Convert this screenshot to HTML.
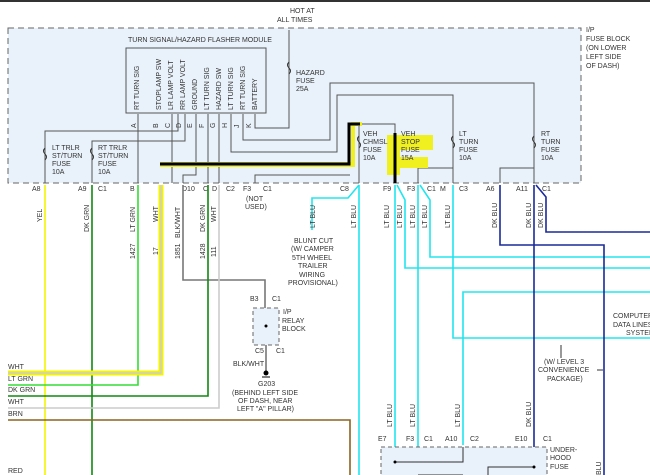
<!DOCTYPE html>
<html><head><style>
html,body{margin:0;padding:0;background:#fff;}
svg{display:block;font-family:"Liberation Sans",sans-serif;}
text{font-size:7px;fill:#333;}
.v{font-size:7px;}
</style></head><body>
<svg width="650" height="475" viewBox="0 0 650 475" xmlns="http://www.w3.org/2000/svg">
<rect x="0" y="0" width="650" height="2" fill="#333"/>
<!-- main fuse block -->
<rect x="8" y="28" width="573" height="155" fill="#e9f2fa" stroke="#666" stroke-dasharray="6,4" stroke-width="1"/>
<text x="290" y="13">HOT AT</text><text x="277" y="22">ALL TIMES</text>
<text x="586" y="32">I/P</text><text x="586" y="41">FUSE BLOCK</text><text x="586" y="50">(ON LOWER</text><text x="586" y="59">LEFT SIDE</text><text x="586" y="68">OF DASH)</text>
<text x="128" y="42">TURN SIGNAL/HAZARD FLASHER MODULE</text>
<rect x="126" y="48" width="140" height="65" fill="#e9f2fa" stroke="#555"/>
<g class="v">
<text transform="translate(139,110) rotate(-90)">RT TURN SIG</text>
<text transform="translate(161,110) rotate(-90)">STOPLAMP SW</text>
<text transform="translate(173,110) rotate(-90)">LR LAMP VOLT</text>
<text transform="translate(185,110) rotate(-90)">RR LAMP VOLT</text>
<text transform="translate(197,110) rotate(-90)">GROUND</text>
<text transform="translate(209,110) rotate(-90)">LT TURN SIG</text>
<text transform="translate(221,110) rotate(-90)">HAZARD SW</text>
<text transform="translate(233,110) rotate(-90)">LT TURN SIG</text>
<text transform="translate(245,110) rotate(-90)">RT TURN SIG</text>
<text transform="translate(257,110) rotate(-90)">BATTERY</text>
<text transform="translate(136,128) rotate(-90)">A</text>
<text transform="translate(158,128) rotate(-90)">B</text>
<text transform="translate(170,128) rotate(-90)">C</text>
<text transform="translate(181,128) rotate(-90)">D</text>
<text transform="translate(192,128) rotate(-90)">E</text>
<text transform="translate(204,128) rotate(-90)">F</text>
<text transform="translate(215,128) rotate(-90)">G</text>
<text transform="translate(227,128) rotate(-90)">H</text>
<text transform="translate(239,128) rotate(-90)">J</text>
<text transform="translate(251,128) rotate(-90)">K</text>
</g>
<!-- internal wires -->
<g fill="none" stroke="#555" stroke-width="1">
<path d="M138 114V183"/>
<path d="M172 114V183"/>
<path d="M178 114V131H45V183"/>
<path d="M185 114V141H92V183"/>
<path d="M196 114V175H183V183"/>
<path d="M208 114V183"/>
<path d="M219 114V183"/>
<path d="M231 114V152H337V95H453V183"/>
<path d="M243 114V140H330V83H534V183"/>
<path d="M255 114V128H289V30"/>
<path d="M359 124V183"/>
<path d="M418 183V168H453"/>
<path d="M500 183V168H534"/>
<path d="M348 124H395V183"/>
<path d="M255 183V175H350"/>
</g>
<!-- fuse symbols -->
<g fill="none" stroke="#333" stroke-width="1">
<path d="M45 148q-3 3 0 6q3 3 0 6"/><path d="M92 148q-3 3 0 6q3 3 0 6"/>
<path d="M289 62q-3 3 0 6q3 3 0 6"/><path d="M359 136q-3 3 0 6q3 3 0 6"/>
<path d="M453 136q-3 3 0 6q3 3 0 6"/><path d="M534 136q-3 3 0 6q3 3 0 6"/>
</g>
<text x="52" y="150">LT TRLR</text><text x="52" y="158">ST/TURN</text><text x="52" y="166">FUSE</text><text x="52" y="174">10A</text>
<text x="98" y="150">RT TRLR</text><text x="98" y="158">ST/TURN</text><text x="98" y="166">FUSE</text><text x="98" y="174">10A</text>
<text x="296" y="75">HAZARD</text><text x="296" y="83">FUSE</text><text x="296" y="91">25A</text>
<!-- yellow highlight -->
<path d="M387 135H433V150H400V157H428V168H400V175H387Z" fill="#f0f020"/>
<path d="M160 162H351V122H362V126H355V167H160Z" fill="#f0f020"/>
<path d="M160 164H349V124H360" fill="none" stroke="#000" stroke-width="3"/>
<path d="M395 133V183" stroke="#000" stroke-width="3"/>
<text x="363" y="136">VEH</text><text x="363" y="144">CHMSL</text><text x="363" y="152">FUSE</text><text x="363" y="160">10A</text>
<text x="401" y="136">VEH</text><text x="401" y="144">STOP</text><text x="401" y="152">FUSE</text><text x="401" y="160">15A</text>
<text x="459" y="136">LT</text><text x="459" y="144">TURN</text><text x="459" y="152">FUSE</text><text x="459" y="160">10A</text>
<text x="541" y="136">RT</text><text x="541" y="144">TURN</text><text x="541" y="152">FUSE</text><text x="541" y="160">10A</text>
<!-- connector labels -->
<text x="32" y="191">A8</text><text x="78" y="191">A9</text><text x="98" y="191">C1</text>
<text x="130" y="191">B</text><text x="182" y="191">D10</text><text x="203" y="191">C</text><text x="212" y="191">D</text><text x="226" y="191">C2</text>
<text x="243" y="191">F3</text><text x="263" y="191">C1</text><text x="246" y="201">(NOT</text><text x="245" y="209">USED)</text>
<text x="340" y="191">C8</text><text x="383" y="191">F9</text><text x="407" y="191">F3</text><text x="427" y="191">C1</text><text x="440" y="191">M</text><text x="459" y="191">C3</text>
<text x="486" y="191">A6</text><text x="516" y="191">A11</text><text x="542" y="191">C1</text>
<!-- wires below -->
<g fill="none" stroke-width="1.6">
<path d="M45 185V475" stroke="#f4f400"/>
<path d="M92 185V475" stroke="#118811"/>
<path d="M138 185V385H8" stroke="#33dd33"/>
<path d="M183 185V280H265V335" stroke="#777"/>
<path d="M208 185V396H8" stroke="#118811"/>
<path d="M219 185V408H8" stroke="#ccc"/>
<path d="M8 420H350V475" stroke="#8a6420"/>
<path d="M359 185L348 198H312V230" stroke="#22e5ee"/>
<path d="M359 185V475" stroke="#22e5ee"/>
<path d="M395 185V475" stroke="#22e5ee"/>
<path d="M397 185L405 200V268H650" stroke="#22e5ee"/>
<path d="M418 185V475" stroke="#22e5ee"/>
<path d="M420 185L430 200V257H650" stroke="#22e5ee"/>
<path d="M453 185V338H650" stroke="#22e5ee"/>
<path d="M463 445V292H650" stroke="#22e5ee"/>
<path d="M500 185V245H604V475" stroke="#1a2a9a"/>
<path d="M534 185V475" stroke="#1a2a9a"/>
<path d="M536 185L546 197V232H650" stroke="#1a2a9a"/>
</g>
<g fill="none" stroke="#f4f400" stroke-width="5"><path d="M161 185V373H8"/></g>
<g fill="none" stroke="#ccc" stroke-width="1.5"><path d="M161 185V373H8"/></g>
<!-- rotated wire labels -->
<g>
<text transform="translate(42,222) rotate(-90)">YEL</text>
<text transform="translate(89,232) rotate(-90)">DK GRN</text>
<text transform="translate(135,232) rotate(-90)">LT GRN</text>
<text transform="translate(158,222) rotate(-90)">WHT</text>
<text transform="translate(180,238) rotate(-90)">BLK/WHT</text>
<text transform="translate(205,232) rotate(-90)">DK GRN</text>
<text transform="translate(216,222) rotate(-90)">WHT</text>
<text transform="translate(135,259) rotate(-90)">1427</text>
<text transform="translate(158,255) rotate(-90)">17</text>
<text transform="translate(180,259) rotate(-90)">1851</text>
<text transform="translate(205,259) rotate(-90)">1428</text>
<text transform="translate(216,257) rotate(-90)">111</text>
<text transform="translate(315,228) rotate(-90)">LT BLU</text>
<text transform="translate(356,228) rotate(-90)">LT BLU</text>
<text transform="translate(389,228) rotate(-90)">LT BLU</text>
<text transform="translate(402,228) rotate(-90)">LT BLU</text>
<text transform="translate(415,228) rotate(-90)">LT BLU</text>
<text transform="translate(427,228) rotate(-90)">LT BLU</text>
<text transform="translate(450,228) rotate(-90)">LT BLU</text>
<text transform="translate(497,228) rotate(-90)">DK BLU</text>
<text transform="translate(531,228) rotate(-90)">DK BLU</text>
<text transform="translate(543,228) rotate(-90)">DK BLU</text>
<text transform="translate(392,427) rotate(-90)">LT BLU</text>
<text transform="translate(415,427) rotate(-90)">LT BLU</text>
<text transform="translate(460,427) rotate(-90)">LT BLU</text>
<text transform="translate(531,427) rotate(-90)">DK BLU</text>
<text transform="translate(601,475) rotate(-90)">BLU</text>
</g>
<text x="294" y="243">BLUNT CUT</text><text x="291" y="251">(W/ CAMPER</text><text x="292" y="260">5TH WHEEL</text><text x="298" y="268">TRAILER</text><text x="299" y="277">WIRING</text><text x="288" y="285">PROVISIONAL)</text>
<!-- relay block -->
<rect x="253" y="308" width="26" height="37" fill="#e9f2fa" stroke="#666" stroke-dasharray="4,3"/>
<text x="250" y="301">B3</text><text x="272" y="301">C1</text>
<text x="283" y="314">I/P</text><text x="282" y="323">RELAY</text><text x="282" y="331">BLOCK</text>
<text x="255" y="353">C5</text><text x="276" y="353">C1</text>
<text x="233" y="366">BLK/WHT</text>
<circle cx="266" cy="326" r="1.5" fill="#000"/>
<path d="M266 345V372" stroke="#777" stroke-width="1.6"/>
<circle cx="266" cy="373" r="2.5" fill="#000"/><path d="M262 377H270" stroke="#000"/>
<text x="258" y="386">G203</text><text x="232" y="395">(BEHIND LEFT SIDE</text><text x="238" y="403">OF DASH, NEAR</text><text x="237" y="411">LEFT "A" PILLAR)</text>
<!-- left labels -->
<text x="8" y="369">WHT</text><text x="8" y="381">LT GRN</text><text x="8" y="392">DK GRN</text><text x="8" y="404">WHT</text><text x="8" y="416">BRN</text><text x="8" y="473">RED</text>
<text x="613" y="318">COMPUTER</text><text x="613" y="327">DATA LINES</text><text x="626" y="335">SYSTEM</text>
<text x="544" y="364">(W/ LEVEL 3</text><text x="538" y="372">CONVENIENCE</text><text x="547" y="381">PACKAGE)</text>
<path d="M561 358V345" stroke="#333"/><path d="M597 370H603" stroke="#333"/>
<!-- underhood -->
<rect x="381" y="447" width="166" height="40" fill="#e9f2fa" stroke="#666" stroke-dasharray="4,3"/>
<text x="378" y="441">E7</text><text x="406" y="441">F3</text><text x="424" y="441">C1</text><text x="445" y="441">A10</text><text x="470" y="441">C2</text><text x="515" y="441">E10</text><text x="543" y="441">C1</text>
<text x="550" y="452">UNDER-</text><text x="550" y="460">HOOD</text><text x="550" y="469">FUSE</text>
<path d="M395 462H463V447M418 475H463M488 475V467H534" fill="none" stroke="#333"/>
<circle cx="395" cy="462" r="1.5"/><circle cx="534" cy="467" r="1.5"/>
</svg>
</body></html>
